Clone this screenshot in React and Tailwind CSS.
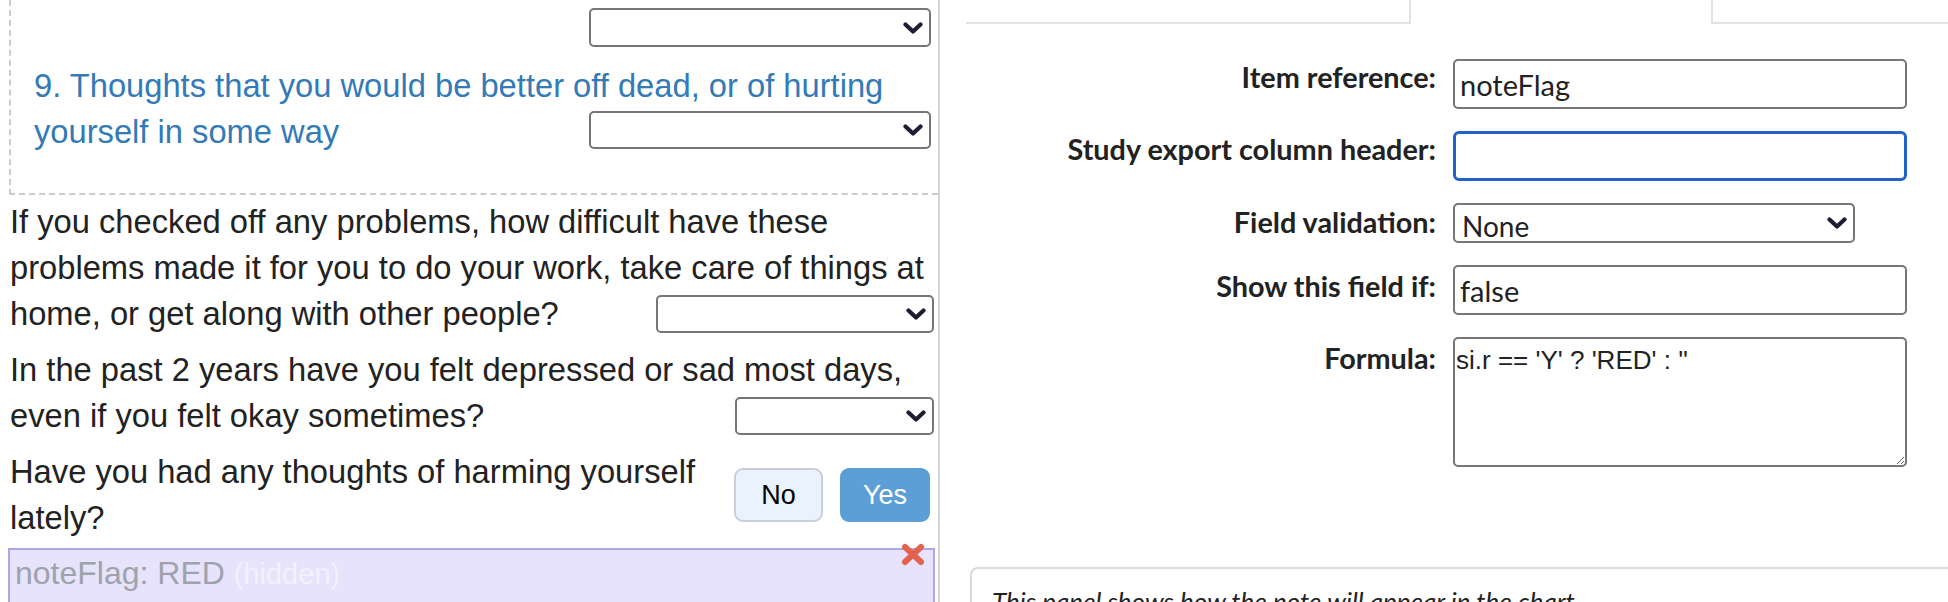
import React from "react";

function Chevron() {
  return (
    <svg
      className="pointer-events-none absolute right-[8px] top-1/2 -translate-y-1/2"
      width="20"
      height="12"
      viewBox="0 0 20 12"
    >
      <path
        d="M2.5 2.5 L10 9.5 L17.5 2.5"
        fill="none"
        stroke="#1d1d33"
        strokeWidth="4.2"
        strokeLinecap="round"
        strokeLinejoin="round"
      />
    </svg>
  );
}

function Select({ className = "", value = "", textClass = "" }) {
  return (
    <div className={`relative shrink-0 ${className}`}>
      <select
        defaultValue={value}
        className={`h-full w-full appearance-none rounded-[5px] border-2 border-[#767676] bg-white pl-[7px] outline-none ${textClass}`}
      >
        <option value={value}>{value}</option>
      </select>
      <Chevron />
    </div>
  );
}

function LeftPanel() {
  return (
    <div className="h-full w-[940px] shrink-0 overflow-hidden border-r-2 border-[#d5d5d5] font-['Liberation_Sans',Arial,sans-serif] text-[32.7px] leading-[46px] text-[#222]">
      <div className="ml-[9px] border-b-2 border-l-2 border-dashed border-[#cccccc] pb-[38px] pl-[23px] pr-[7px]">
        <div className="flex justify-end pt-[8px]">
          <Select className="h-[39px] w-[342px]" />
        </div>
        <div className="mt-[16px] text-[#337ab7]">
          <div>9. Thoughts that you would be better off dead, or of hurting</div>
          <div className="flex items-start justify-between">
            <span>yourself in some way</span>
            <Select className="mt-[2px] h-[38px] w-[342px]" />
          </div>
        </div>
      </div>

      <div className="mt-[4px] pl-[10px] pr-[4px]">
        <div>If you checked off any problems, how difficult have these</div>
        <div>problems made it for you to do your work, take care of things at</div>
        <div className="flex items-center justify-between">
          <span>home, or get along with other people?</span>
          <Select className="h-[38px] w-[278px]" />
        </div>
      </div>

      <div className="mt-[10px] pl-[10px] pr-[4px]">
        <div>In the past 2 years have you felt depressed or sad most days,</div>
        <div className="flex items-center justify-between">
          <span>even if you felt okay sometimes?</span>
          <Select className="h-[38px] w-[199px]" />
        </div>
      </div>

      <div className="mt-[10px] flex items-center justify-between pl-[10px] pr-[8px]">
        <div>
          Have you had any thoughts of harming yourself
          <br />
          lately?
        </div>
        <div className="flex gap-[17px] text-[27px]">
          <button className="h-[54px] w-[89px] rounded-[9px] border-2 border-[#c8cfd9] bg-[#e8f3fe] text-black">
            No
          </button>
          <button className="h-[54px] w-[90px] rounded-[9px] border-2 border-[#5c9fd6] bg-[#5c9fd6] text-white">
            Yes
          </button>
        </div>
      </div>

      <div className="relative ml-[8px] mt-[7px] h-[70px] w-[927px] border-2 border-[#aba8e8] bg-[#e7e3fc] pl-[5px] text-[32px]">
        <span className="text-[#9ea3ab]">noteFlag: RED</span>{" "}
        <span className="text-[29px] text-[#f3f1fe]">(hidden)</span>
        <svg
          className="absolute right-[8px] top-[-7px]"
          width="24"
          height="23"
          viewBox="0 0 24 23"
        >
          <path
            d="M4 4 L20 19 M20 4 L4 19"
            stroke="#e2614f"
            strokeWidth="6"
            strokeLinecap="round"
          />
        </svg>
      </div>
    </div>
  );
}

function Label({ children, className = "" }) {
  return (
    <div
      className={`self-start text-right text-[28.8px] font-bold leading-[34px] text-[#222] ${className}`}
    >
      {children}
    </div>
  );
}

function RightPanel() {
  return (
    <div className="h-full min-w-0 flex-1 overflow-hidden font-['Lato',sans-serif] text-[#222]">
      <div className="flex h-[24px] pl-[26px]">
        <div className="w-[445px] border-b-2 border-r-2 border-[#e2e2e2]" />
        <div className="w-[300px]" />
        <div className="flex-1 border-b-2 border-l-2 border-[#e2e2e2]" />
      </div>

      <div className="mt-[35px] grid grid-cols-[496px_auto] gap-x-[17px] gap-y-[22px]">
        <Label className="pt-[1px]">Item reference:</Label>
        <input
          defaultValue="noteFlag"
          className="h-[50px] w-[454px] rounded-[5px] border-2 border-[#767676] bg-white px-[5px] text-[29px] text-[#222] outline-none"
        />

        <Label className="pt-[1px]">Study export column header:</Label>
        <input
          defaultValue=""
          className="h-[50px] w-[454px] rounded-[6px] border-[3px] border-[#2461c9] bg-white px-[5px] text-[29px] outline-none"
        />

        <Label className="pt-[2px]">Field validation:</Label>
        <Select
          className="h-[40px] w-[402px]"
          value="None"
          textClass="text-[28px] font-['Lato',sans-serif] text-[#222]"
        />

        <Label className="pt-[4px]">Show this field if:</Label>
        <input
          defaultValue="false"
          className="h-[50px] w-[454px] rounded-[5px] border-2 border-[#767676] bg-white px-[5px] text-[29px] text-[#222] outline-none"
        />

        <Label className="pt-[4px]">Formula:</Label>
        <textarea
          defaultValue={"si.r == 'Y' ? 'RED' : ''"}
          className="h-[130px] w-[454px] rounded-[5px] border-2 border-[#767676] bg-white pl-[1px] pt-[6px] font-['Liberation_Sans',Arial,sans-serif] text-[26px] leading-[30px] text-[#222] outline-none"
        />
      </div>

      <div className="ml-[30px] mt-[100px] h-[200px] rounded-tl-[8px] border-l-2 border-t-2 border-[#dadada] pl-[20px] pt-[15px]">
        <div className="text-[26px] italic leading-[34px] text-[#222]">
          This panel shows how the note will appear in the chart
        </div>
      </div>
    </div>
  );
}

export default function App() {
  return (
    <div className="flex h-[602px] w-[1948px] overflow-hidden bg-white">
      <LeftPanel />
      <RightPanel />
    </div>
  );
}
